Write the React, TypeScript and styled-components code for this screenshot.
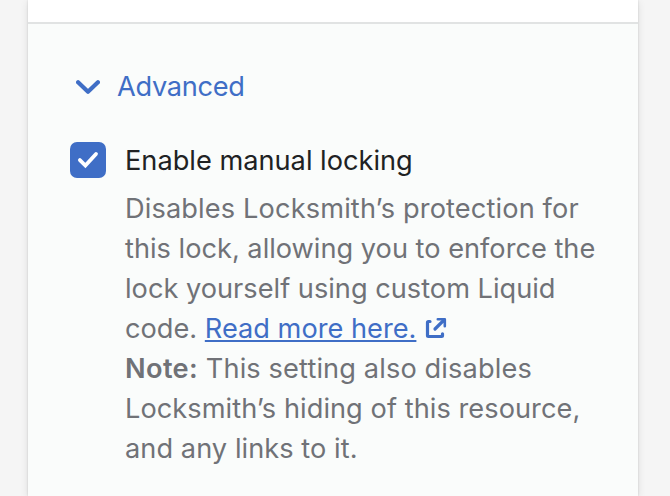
import React from "react";
import styled, { createGlobalStyle } from "styled-components";

const GlobalStyle = createGlobalStyle`
  *, *::before, *::after { box-sizing: border-box; }
  body {
    margin: 0;
    background: #f5f5f5;
    overflow: hidden;
    font-family: Inter, "Liberation Sans", sans-serif;
    -webkit-font-smoothing: antialiased;
  }
`;

const Page = styled.div`
  height: 496px;
  padding: 0 32px 0 28px;
  overflow: hidden;
`;

const Card = styled.main`
  height: 100%;
  background: #fff;
  box-shadow: 0 0 2px rgba(23, 24, 24, 0.14), 0 2px 8px rgba(23, 24, 24, 0.1);
  padding-top: 22px;
`;

const Section = styled.section`
  height: 474px;
  border-top: 2px solid #e1e3e3;
  background: #fafcfb;
  padding: 43px 40px 0 42px;
`;

const Disclosure = styled.button`
  display: flex;
  align-items: center;
  height: 40px;
  margin: 0;
  padding: 0 0 0 6px;
  border: 0;
  gap: 17px;
  background: none;
  color: #3f6ec6;
  font: 400 27.2px/40px Inter, "Liberation Sans", sans-serif;
`;

const Icon = styled.svg`
  display: block;
  flex: none;
`;

const Option = styled.div`
  display: grid;
  grid-template-columns: 36px 1fr;
  column-gap: 19px;
  margin-top: 34px;
`;

const Checkbox = styled.span`
  width: 36px;
  height: 36px;
  margin-top: 1px;
  border-radius: 7px;
  background: #3f6ec6;
`;

const Line = styled.span<{ $tracking?: number }>`
  display: block;
  width: max-content;
  white-space: nowrap;
  letter-spacing: ${(p) => p.$tracking ?? 0}px;
`;

const Label = styled.label`
  color: #202223;
  font-size: 27.2px;
  line-height: 40px;
`;

const Help = styled.p`
  grid-column: 2;
  margin: 8px 0 0;
  color: #707277;
  font-size: 27.2px;
  line-height: 40px;

  strong {
    font-weight: 600;
    letter-spacing: 0.35px;
  }
`;

const Link = styled.a`
  color: #3f6ec6;
  text-decoration: underline;
  text-decoration-thickness: 2px;
  text-underline-offset: 2px;
  text-decoration-skip-ink: none;
`;

const ExternalIcon = styled.svg`
  display: inline-block;
  width: 22px;
  height: 22px;
  margin-left: 9px;
  vertical-align: -1px;
`;

export default function App() {
  return (
    <>
      <GlobalStyle />
      <Page>
        <Card>
          <Section>
            <Disclosure type="button" aria-expanded="true">
              <Icon width="24" height="16" viewBox="0 0 24 16" fill="none" stroke="currentColor" strokeWidth="4.2" strokeLinecap="round" strokeLinejoin="round">
                <path d="M2.1 3.3 L12 12.8 L21.9 3.3" />
              </Icon>
              <Line $tracking={-0.3}>Advanced</Line>
            </Disclosure>
            <Option>
              <Checkbox role="checkbox" aria-checked="true" aria-labelledby="manual-locking">
                <Icon width="36" height="36" viewBox="0 0 36 36" fill="none" stroke="#fff" strokeWidth="3.8" strokeLinecap="round" strokeLinejoin="miter">
                  <path d="M9.9 18.1 L15.4 23.5 L26 12" />
                </Icon>
              </Checkbox>
              <Label id="manual-locking">
                <Line>Enable manual locking</Line>
              </Label>
              <Help>
                <Line $tracking={0.13}>Disables Locksmith’s protection for</Line>
                <Line>this lock, allowing you to enforce the</Line>
                <Line>lock yourself using custom Liquid</Line>
                <Line>
                  code. <Link href="#">Read more here.</Link>
                  <ExternalIcon viewBox="0 0 22 22" fill="none" stroke="#3f6ec6" strokeWidth="3.2" strokeLinecap="round" strokeLinejoin="round">
                    <path d="M5 4.5 H3.4 Q2.5 4.5 2.5 5.4 V18.6 Q2.5 19.5 3.4 19.5 H16.6 Q17.5 19.5 17.5 18.6 V16.8" />
                    <path d="M10 12 L18 4" />
                    <path d="M12.8 2.2 H19.8 V9.2" strokeWidth="2.6" />
                  </ExternalIcon>
                </Line>
                <Line $tracking={0.12}><strong>Note:</strong> This setting also disables</Line>
                <Line $tracking={0.05}>Locksmith’s hiding of this resource,</Line>
                <Line $tracking={0.05}>and any links to it.</Line>
              </Help>
            </Option>
          </Section>
        </Card>
      </Page>
    </>
  );
}
